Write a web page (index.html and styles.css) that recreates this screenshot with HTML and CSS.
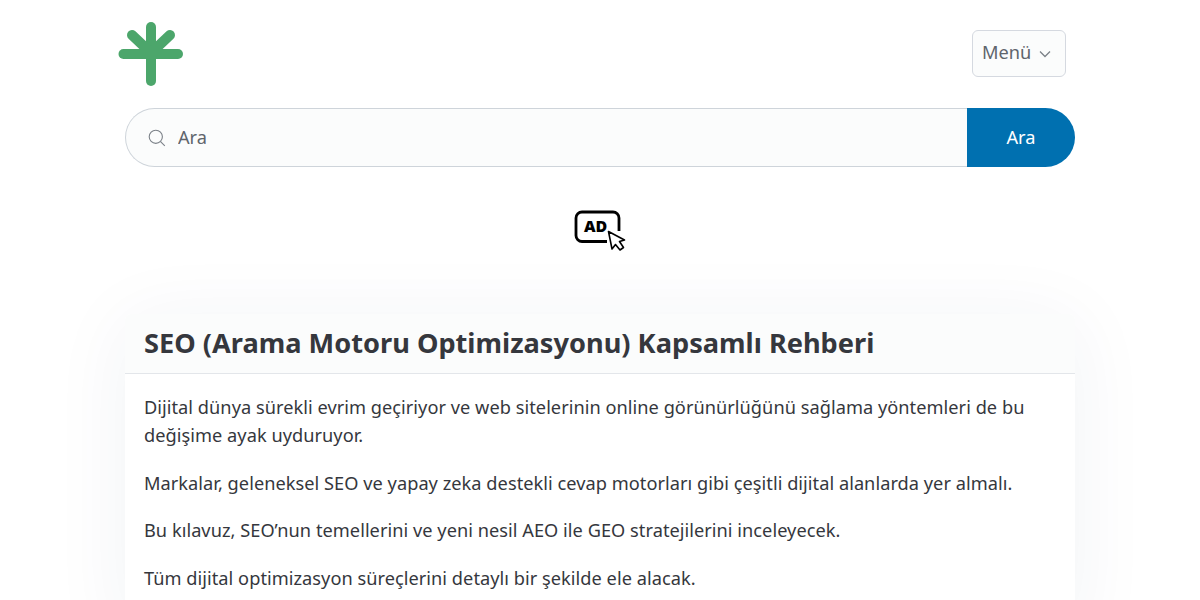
FILE: index.html
```html
<!DOCTYPE html>
<html lang="tr">
<head>
<meta charset="utf-8">
<title>SEO (Arama Motoru Optimizasyonu) Kapsamlı Rehberi</title>
<link rel="stylesheet" href="styles.css">
</head>
<body>
<div class="page">
	<header class="top">
		<a class="logo" href="#">
			<svg width="66" height="66" viewBox="0 0 66 66">
				<g fill="none" stroke="#4ca66b" stroke-width="10" stroke-linecap="round">
					<path d="M33 6V60"/>
					<path d="M5.500 33H60"/>
					<path d="M14 14L33 32L52 14"/>
				</g>
			</svg>
		</a>
		<button class="menu-btn" type="button"><span class="menu-label">Menü</span>
			<svg width="12" height="8" viewBox="0 0 12 8"><path d="M1 1.500L6 6.500L11 1.500" fill="none" stroke="#7b8188" stroke-width="1.300"/></svg>
		</button>
	</header>

	<form class="search">
		<div class="search-box">
			<svg width="18" height="18" viewBox="0 0 18 18" fill="none" stroke="#7b8188" stroke-width="1.100"><circle cx="7.800" cy="7.800" r="6.600"/><path d="M12.600 12.600L16.800 16.800"/></svg>
			<input class="search-input" type="text" placeholder="Ara">
		</div>
		<button class="search-btn" type="button">Ara</button>
	</form>

	<div class="ad">
		<svg width="52" height="42" viewBox="0 0 52 42">
			<path d="M33 31.500H8a6 6 0 0 1-6-6V8a6 6 0 0 1 6-6H39a6 6 0 0 1 6 6V21" fill="none" stroke="#000" stroke-width="2.800"/>
			<text class="ad-text" x="10" y="22">AD</text>
			<path d="M34.500 21.500L38 39L41.500 34.500L46 40L49.500 37.500L45.500 31.500L50.500 30Z" fill="#fff" stroke="#000" stroke-width="1.600" stroke-linejoin="round"/>
		</svg>
	</div>

	<article class="card">
		<h1 class="card-head">SEO (Arama Motoru Optimizasyonu) Kapsamlı Rehberi</h1>
		<div class="card-body">
			<p>Dijital dünya sürekli evrim geçiriyor ve web sitelerinin online görünürlüğünü sağlama yöntemleri de bu değişime ayak uyduruyor.</p>
			<p>Markalar, geleneksel SEO ve yapay zeka destekli cevap motorları gibi çeşitli dijital alanlarda yer almalı.</p>
			<p>Bu kılavuz, SEO’nun temellerini ve yeni nesil AEO ile GEO stratejilerini inceleyecek.</p>
			<p>Tüm dijital optimizasyon süreçlerini detaylı bir şekilde ele alacak.</p>
		</div>
	</article>
</div>
</body>
</html>
```

FILE: styles.css
```css
* {box-sizing:border-box;}
html, body {height:100%; overflow:hidden;}
body {margin:0; background:#fff; color:#35373d; font-family:"Noto Sans", sans-serif; font-size:18.2px;}
.page {width:950px; margin:0 auto;}

.top {display:flex; justify-content:space-between; align-items:flex-start; height:108px; padding-top:21px; margin:0 9px 0 -7px;}
.logo {display:block; height:66px;}
.logo svg {display:block;}
.menu-btn {display:flex; align-items:center; gap:8px; width:94px; height:47px; margin-top:9px; padding:0 9px 3px; background:#fbfcfc; border:1px solid #d5d9e0; border-radius:6px; color:#5f656c; font:18.2px "Noto Sans", sans-serif;}
.menu-btn svg {margin-top:3px;}

.search {display:flex; height:59px;}
.search-box {flex:1; display:flex; align-items:center; gap:12px; padding-left:22px; background:#fbfcfc; border:1px solid #ced4da; border-right:0; border-radius:30px 0 0 30px;}
.search-input {flex:1; padding:0 0 2px; border:0; background:transparent; outline:0; font:18.2px "Noto Sans", sans-serif; color:#5f656c;}
.search-input::placeholder {color:#5f656c; opacity:1;}
.search-btn {width:108px; padding:0 0 2px; border:0; background:#0070b0; color:#fff; border-radius:0 30px 30px 0; font:18.2px "Noto Sans", sans-serif;}

.ad {display:flex; justify-content:center; height:147px; padding-top:43px;}
.ad svg {display:block;}
.ad-text {font:900 16px "Noto Sans", sans-serif; fill:#000;}

.card {background:#fff; border-radius:6px; box-shadow:0 8px 80px rgba(40,50,110,.06);}
.card-head {margin:0; height:60px; padding:0 19px; background:#fbfcfc; border-bottom:1px solid #e3e6ea; font-size:27.2px; font-weight:700; line-height:57px; color:#35373d; border-radius:6px 6px 0 0;}
.card-body {padding:18.6px 19px; letter-spacing:.04px;}
.card-body p {margin:0 0 19px; line-height:28.5px;}
```
